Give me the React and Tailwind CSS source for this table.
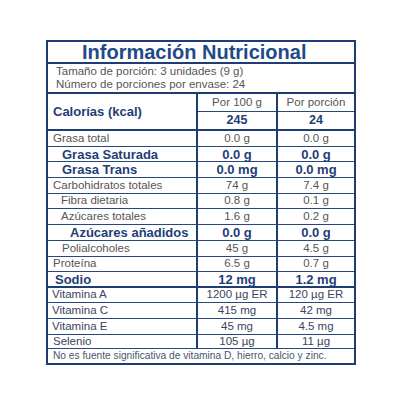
import React from 'react';

const rows = [
  { name: 'Grasa total', a: '0.0 g', b: '0.0 g', h: 'h-[16px]', pad: 'pl-[5px]' },
  { name: 'Grasa Saturada', a: '0.0 g', b: '0.0 g', h: 'h-[15px]', pad: 'pl-[14px]', bold: true },
  { name: 'Grasa Trans', a: '0.0 mg', b: '0.0 mg', h: 'h-[16px]', pad: 'pl-[14px]', bold: true },
  { name: 'Carbohidratos totales', a: '74 g', b: '7.4 g', h: 'h-[16px]', pad: 'pl-[5px]' },
  { name: 'Fibra dietaria', a: '0.8 g', b: '0.1 g', h: 'h-[15px]', pad: 'pl-[13px]' },
  { name: 'Azúcares totales', a: '1.6 g', b: '0.2 g', h: 'h-[16px]', pad: 'pl-[13px]' },
  { name: 'Azúcares añadidos', a: '0.0 g', b: '0.0 g', h: 'h-[16px]', pad: 'pl-[22px]', bold: true },
  { name: 'Polialcoholes', a: '45 g', b: '4.5 g', h: 'h-[16px]', pad: 'pl-[14px]' },
  { name: 'Proteína', a: '6.5 g', b: '0.7 g', h: 'h-[15px]', pad: 'pl-[5px]' },
  { name: 'Sodio', a: '12 mg', b: '1.2 mg', h: 'h-[16px]', pad: 'pl-[7px]', bold: true, thick: true },
  { name: 'Vitamina A', a: '1200 µg ER', b: '120 µg ER', h: 'h-[15px]', pad: 'pl-[4px]', vit: true },
  { name: 'Vitamina C', a: '415 mg', b: '42 mg', h: 'h-[16px]', pad: 'pl-[4px]', vit: true },
  { name: 'Vitamina E', a: '45 mg', b: '4.5 mg', h: 'h-[16px]', pad: 'pl-[4px]', vit: true },
  { name: 'Selenio', a: '105 µg', b: '11 µg', h: 'h-[14px]', pad: 'pl-[5px]', vit: true },
];

function Row({ r }) {
  const txt = r.bold
    ? 'font-bold text-[13px] text-[#1f3d78]'
    : r.vit
    ? 'text-[11.5px] text-[#3a4560]'
    : 'text-[11.5px] text-[#555555]';
  const line = r.thick ? 'border-b-2 border-[#1f3d73]' : 'border-b border-[#2a4778]';
  return (
    <div className={`flex ${r.h} ${line} leading-none`}>
      <div className={`w-[148px] flex items-center ${r.pad} ${txt}`}>{r.name}</div>
      <div className={`w-[80px] border-l-2 border-[#1f3d73] flex items-center justify-center ${txt}`}>{r.a}</div>
      <div className={`flex-1 border-l-2 border-[#1f3d73] flex items-center justify-center ${txt}`}>{r.b}</div>
    </div>
  );
}

export default function App() {
  return (
    <div
      className="w-[404px] h-[404px] bg-white pt-[40px] pl-[46px]"
      style={{ fontFamily: '"Liberation Sans", Arial, sans-serif' }}
    >
      <div className="w-[310px] border-2 border-[#1f3d73]">
        <div className="h-[22px] border-b-2 border-[#1f3d73] pl-[34px] flex items-center text-[20px] font-bold text-[#1f4a8a] leading-none">
          Información Nutricional
        </div>
        <div className="h-[30px] border-b-2 border-[#1f3d73] pl-[8px] flex flex-col justify-center text-[11.5px] leading-[13px] text-[#555555]">
          <span>Tamaño de porción: 3 unidades (9 g)</span>
          <span>Número de porciones por envase: 24</span>
        </div>
        <div className="flex h-[37px] border-b-2 border-[#1f3d73] leading-none">
          <div className="w-[148px] flex items-center pl-[5px] font-bold text-[13px] text-[#1f3d78]">
            Calorías (kcal)
          </div>
          <div className="w-[80px] border-l-2 border-[#1f3d73] flex flex-col">
            <div className="h-[18px] border-b border-[#2a4778] flex items-center justify-center text-[11.5px] text-[#555555]">
              Por 100 g
            </div>
            <div className="flex-1 flex items-center justify-center font-bold text-[12.5px] text-[#1f3d78]">245</div>
          </div>
          <div className="flex-1 border-l-2 border-[#1f3d73] flex flex-col">
            <div className="h-[18px] border-b border-[#2a4778] flex items-center justify-center text-[11.5px] text-[#555555]">
              Por porción
            </div>
            <div className="flex-1 flex items-center justify-center font-bold text-[12.5px] text-[#1f3d78]">24</div>
          </div>
        </div>
        {rows.map((r) => (
          <Row key={r.name} r={r} />
        ))}
        <div className="h-[14px] pl-[5px] flex items-center text-[10.2px] leading-none text-[#4a5572]">
          No es fuente significativa de vitamina D, hierro, calcio y zinc.
        </div>
      </div>
    </div>
  );
}
